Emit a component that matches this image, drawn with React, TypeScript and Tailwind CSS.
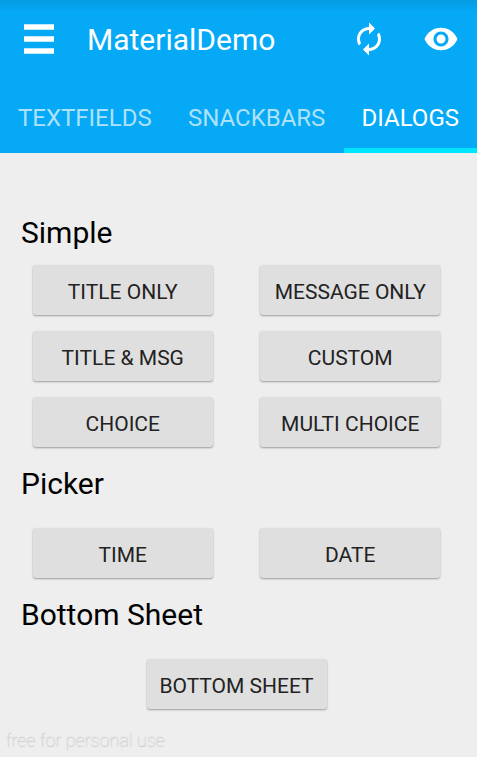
import React, { useState } from "react";

const tabs = ["TEXTFIELDS", "SNACKBARS", "DIALOGS"];

const sections = [
  {
    title: "Simple",
    gap: "pt-[14px]",
    buttons: ["TITLE ONLY", "MESSAGE ONLY", "TITLE & MSG", "CUSTOM", "CHOICE", "MULTI CHOICE"],
  },
  { title: "Picker", gap: "pt-[26px]", buttons: ["TIME", "DATE"] },
  { title: "Bottom Sheet", gap: "pt-[26px]", buttons: ["BOTTOM SHEET"] },
];

function RaisedButton({ label }: { label: string }) {
  return (
    <button
      type="button"
      className="h-[50px] w-[180px] whitespace-nowrap rounded-[3px] bg-[#dfdfdf] pt-[3px] text-[21px] leading-[24px] text-[#222222] shadow-[0_1px_2px_rgba(0,0,0,0.35)]"
    >
      {label}
    </button>
  );
}

export default function App() {
  const [active, setActive] = useState("DIALOGS");
  return (
    <div className="flex min-h-screen flex-col bg-[#eeeeee] font-['Roboto',sans-serif]">
      <header className="bg-[#06a9f6] bg-linear-to-b from-[#059be2] to-[#06a9f6] to-[12px] text-white">
        <div className="flex h-[78px] items-center pr-[18px] pl-6">
          <button type="button" aria-label="Open menu" className="mr-[33px]">
            <svg width="30" height="30" viewBox="0 0 30 30" fill="currentColor" className="block">
              <path d="M0 .3h30v5.4H0zM0 12.3h30v5.4H0zM0 24.3h30v5.4H0z" />
            </svg>
          </button>
          <h1 className="flex-1 pt-[2px] text-[30px] leading-[36px]">MaterialDemo</h1>
          <button type="button" aria-label="Refresh" className="mr-9">
            <svg width="36" height="36" viewBox="0 0 24 24" fill="currentColor" className="block">
              <path d="M12 6v3l4-4-4-4v3c-4.42 0-8 3.58-8 8 0 1.57.46 3.03 1.24 4.26L6.7 14.8c-.45-.83-.7-1.79-.7-2.8 0-3.31 2.69-6 6-6zm6.76 1.74L17.3 9.2c.44.84.7 1.79.7 2.8 0 3.31-2.69 6-6 6v-3l-4 4 4 4v-3c4.42 0 8-3.58 8-8 0-1.57-.46-3.03-1.24-4.26z" />
            </svg>
          </button>
          <button type="button" aria-label="Preview">
            <svg width="36" height="36" viewBox="0 0 24 24" fill="currentColor" className="block">
              <path d="M12 4.5C7 4.5 2.73 7.61 1 12c1.73 4.39 6 7.5 11 7.5s9.27-3.11 11-7.5c-1.73-4.39-6-7.5-11-7.5zM12 17c-2.76 0-5-2.24-5-5s2.24-5 5-5 5 2.24 5 5-2.24 5-5 5zm0-8c-1.66 0-3 1.34-3 3s1.34 3 3 3 3-1.34 3-3-1.34-3-3-3z" />
            </svg>
          </button>
        </div>
        <nav role="tablist" className="flex h-[75px] justify-between">
          {tabs.map((tab) => (
            <button
              key={tab}
              type="button"
              role="tab"
              aria-selected={tab === active}
              onClick={() => setActive(tab)}
              className={
                tab === active
                  ? "border-b-5 border-[#00e5ff] px-[18px] pt-[9px] text-[24px] text-white"
                  : "border-b-5 border-transparent px-[18px] pt-[9px] text-[24px] text-[#aee1fa]"
              }
            >
              {tab}
            </button>
          ))}
        </nav>
      </header>
      <main className="flex-1 pt-[62px] pr-[13px] pl-[9px]">
        {sections.map((section) => (
          <section key={section.title}>
            <h2 className="pl-3 text-[30px] leading-[36px] text-black">{section.title}</h2>
            <div
              className={
                section.buttons.length > 1
                  ? `${section.gap} grid grid-cols-2 justify-items-center gap-y-4 pb-[19px]`
                  : `${section.gap} flex justify-center`
              }
            >
              {section.buttons.map((label) => (
                <RaisedButton key={label} label={label} />
              ))}
            </div>
          </section>
        ))}
      </main>
      <footer className="px-[5px] pb-[5px] text-[18px] leading-[24px] font-thin text-[#e8e8e8] [text-shadow:1px_1px_1px_#b4b4b4]">
        free for personal use
      </footer>
    </div>
  );
}
